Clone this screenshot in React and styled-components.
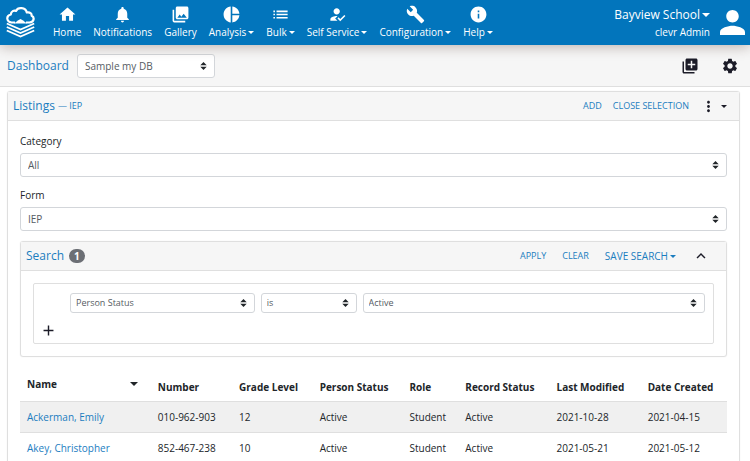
import React from "react";
import styled, { createGlobalStyle, css } from "styled-components";
import {
  MdHome,
  MdNotifications,
  MdPhotoLibrary,
  MdPieChart,
  MdList,
  MdHowToReg,
  MdBuild,
  MdInfo,
  MdPerson,
  MdLibraryAdd,
  MdSettings,
  MdMoreVert,
  MdAdd,
  MdKeyboardArrowUp,
} from "react-icons/md";

const blue = "#0275bc";
const link = "#1b7dbf";
const line = "#dfdfdf";
const bar = "#f6f6f6";

const GlobalStyle = createGlobalStyle`
  * { box-sizing: border-box; }
  body {
    margin: 0;
    background: #fff;
    color: #212529;
    font-family: "Open Sans", "Noto Sans", sans-serif;
    font-size: 10px;
    line-height: 16px;
    overflow-x: hidden;
  }
  button, select { font: inherit; color: inherit; margin: 0; }
  h1, h2 { margin: 0; font-weight: 400; }
  svg { display: block; flex: none; }
`;

const plainButton = css`
  padding: 0;
  border: 0;
  background: none;
  cursor: pointer;
  white-space: nowrap;
`;

const TopNav = styled.nav`
  position: relative;
  display: flex;
  align-items: center;
  height: 45px;
  padding: 0 5px 0 6px;
  background: ${blue};
  color: #fff;
  box-shadow: 0 2px 12px rgba(60, 30, 20, 0.3);
`;

const NavList = styled.ul`
  display: flex;
  gap: 12px;
  margin: 0 0 0 18px;
  padding: 0;
  list-style: none;
`;

const NavButton = styled.button`
  ${plainButton}
  display: flex;
  flex-direction: column;
  align-items: center;
`;

const Label = styled.span`
  display: flex;
  align-items: center;
  gap: 2px;
`;

const Caret = styled.span`
  border: ${(p) => p.$size || 3}px solid transparent;
  border-top-color: currentColor;
  border-bottom: 0;
`;

const Account = styled.div`
  display: flex;
  align-items: center;
  gap: 10px;
  margin-left: auto;
`;

const AccountText = styled.div`
  display: flex;
  flex-direction: column;
  align-items: flex-end;
`;

const SchoolButton = styled.button`
  ${plainButton}
  font-size: 12px;
  line-height: 18px;
`;

const DashBar = styled.header`
  display: flex;
  align-items: center;
  height: 42px;
  padding: 0 11px 0 7px;
  background: ${bar};
  border-bottom: 1px solid ${line};
`;

const PageTitle = styled.h1`
  margin-right: 8px;
  color: ${link};
  font-size: 12px;
`;

const IconGroup = styled.div`
  display: flex;
  align-items: center;
  gap: ${(p) => p.$gap}px;
  margin-left: auto;
`;

const IconButton = styled.button`
  ${plainButton}
  display: flex;
  color: #1c1c28;
`;

const arrows =
  "url(\"data:image/svg+xml,%3Csvg xmlns='http://www.w3.org/2000/svg' viewBox='0 0 4 5'%3E%3Cpath fill='%23212529' d='M2 0L0 2h4zm0 5L0 3h4z'/%3E%3C/svg%3E\")";

const Select = styled.select`
  appearance: none;
  display: block;
  width: 100%;
  height: ${(p) => (p.$small ? 20 : 24)}px;
  padding: 0 20px 0 ${(p) => (p.$small ? 5 : 7)}px;
  border: 1px solid #d3d6da;
  border-radius: 3px;
  background: #fff ${arrows} no-repeat right 7px center / 7px 8px;
  color: #555c63;
  font-size: ${(p) => (p.$small ? 9 : 10)}px;
`;

const DashSelect = styled.div`
  width: 138px;
`;

const Panel = styled.section`
  border: 1px solid ${line};
  border-radius: 3px;
  box-shadow: 0 0 1px rgba(0, 0, 0, 0.15);
`;

const Main = styled.main`
  padding: 4px 10px 0 7px;
`;

const PanelHead = styled.header`
  display: flex;
  align-items: center;
  height: 29px;
  padding: 0 ${(p) => p.$right}px 0 5px;
  background: ${bar};
  border-bottom: 1px solid ${line};
`;

const PanelTitle = styled.h2`
  display: flex;
  align-items: center;
  gap: ${(p) => p.$gap}px;
  color: ${link};
  font-size: 12px;
`;

const Small = styled.span`
  font-size: 9px;
`;

const Badge = styled.span`
  padding: 0 5px;
  border-radius: 7px;
  background: #6c6f75;
  color: #fff;
  font-size: 10px;
  font-weight: 700;
  line-height: 14px;
`;

const Actions = styled.div`
  display: flex;
  align-items: center;
  gap: ${(p) => p.$gap}px;
  margin-left: auto;
`;

const TextButton = styled.button`
  ${plainButton}
  color: ${link};
  font-size: ${(p) => (p.$large ? 10 : 9)}px;
`;

const MenuButton = styled(IconButton)`
  align-items: center;
  gap: 4px;
`;

const PanelBody = styled.div`
  padding: 12px;
`;

const Field = styled.label`
  display: flex;
  flex-direction: column;
  gap: 4px;
  margin-bottom: 10px;
`;

const FilterArea = styled.div`
  padding: 12px;
`;

const FilterBox = styled.div`
  padding: 9px 8px 4px 6px;
  border: 1px solid ${line};
  border-radius: 2px;
`;

const FilterRow = styled.div`
  display: grid;
  grid-template-columns: 185fr 96fr 343fr;
  gap: 6px;
  margin: 0 0 9px 30px;
`;

const Table = styled.table`
  width: 100%;
  margin-top: 13px;
  border-collapse: collapse;
  table-layout: fixed;
`;

const Col = styled.col`
  width: ${(p) => p.$share}%;
`;

const HeadCell = styled.th`
  height: 30px;
  padding: 6px 0 6px 7px;
  text-align: left;
  vertical-align: bottom;
  white-space: nowrap;
`;

const SortButton = styled.button`
  ${plainButton}
  display: flex;
  justify-content: space-between;
  align-items: center;
  width: 100%;
  padding: 0 13px 3px 0;
  font-weight: 700;
`;

const Row = styled.tr`
  border-top: 1px solid ${line};
  background: ${(p) => (p.$shaded ? "#f0f0f0" : "#fff")};
`;

const Cell = styled.td`
  padding: 7px 0 7px 7px;
  white-space: nowrap;
`;

const NameLink = styled.a`
  color: ${link};
  text-decoration: none;
`;

const navItems = [
  ["Home", MdHome],
  ["Notifications", MdNotifications],
  ["Gallery", MdPhotoLibrary],
  ["Analysis", MdPieChart, true],
  ["Bulk", MdList, true],
  ["Self Service", MdHowToReg, true],
  ["Configuration", MdBuild, true],
  ["Help", MdInfo, true],
];

const shares = [18.5, 11.5, 11.4, 12.7, 7.9, 12.9, 12.9, 12.2];
const headings = ["Number", "Grade Level", "Person Status", "Role", "Record Status", "Last Modified", "Date Created"];
const people = [
  ["Ackerman, Emily", "010-962-903", "12", "Active", "Student", "Active", "2021-10-28", "2021-04-15"],
  ["Akey, Christopher", "852-467-238", "10", "Active", "Student", "Active", "2021-05-21", "2021-05-12"],
];

function Logo() {
  return (
    <svg width="29" height="31" viewBox="0 0 29 31" fill="none" stroke="#fff" aria-label="clevr" role="img">
      <path
        d="M9 15.500H5.500C0 14.500 0 8.500 4.800 7.500C5 4 8 3.200 10 3.900C12-.2 19.500 .2 20.800 5.500C24 4.800 26 6.500 25.600 8.800C29 10.500 28 15 23.500 15.500H20"
        strokeWidth="2.200"
        strokeLinejoin="round"
      />
      <path d="M8 16.500L12.300 13.300L14.500 12L16.700 13.300L21 16.500Z" fill="#fff" stroke="none" />
      <path d="M.8 16.500L14.500 22.500L28.200 16.500M.8 20L14.500 26L28.200 20M.8 23.500L14.500 29.500L28.200 23.500" strokeWidth="1.900" />
    </svg>
  );
}

export default function App() {
  return (
    <>
      <GlobalStyle />
      <TopNav>
        <Logo />
        <NavList>
          {navItems.map(([name, Icon, menu]) => (
            <li key={name}>
              <NavButton>
                <Icon size={19} />
                <Label>
                  {name}
                  {menu && <Caret />}
                </Label>
              </NavButton>
            </li>
          ))}
        </NavList>
        <Account>
          <AccountText>
            <SchoolButton>
              <Label>
                Bayview School
                <Caret $size={4} />
              </Label>
            </SchoolButton>
            <span>clevr Admin</span>
          </AccountText>
          <MdPerson size={25} viewBox="4 4 16 16" />
        </Account>
      </TopNav>
      <DashBar>
        <PageTitle>Dashboard</PageTitle>
        <DashSelect>
          <Select aria-label="Dashboard">
            <option>Sample my DB</option>
          </Select>
        </DashSelect>
        <IconGroup $gap={22}>
          <IconButton aria-label="Add widget">
            <MdLibraryAdd size={18} />
          </IconButton>
          <IconButton aria-label="Settings">
            <MdSettings size={18} />
          </IconButton>
        </IconGroup>
      </DashBar>
      <Main>
        <Panel>
          <PanelHead $right={12}>
            <PanelTitle $gap={3}>
              <span>Listings</span>
              <Small>— IEP</Small>
            </PanelTitle>
            <Actions $gap={11}>
              <TextButton>ADD</TextButton>
              <TextButton>CLOSE SELECTION</TextButton>
              <MenuButton aria-label="More options">
                <MdMoreVert size={17} />
                <Caret />
              </MenuButton>
            </Actions>
          </PanelHead>
          <PanelBody>
            <Field>
              Category
              <Select>
                <option>All</option>
              </Select>
            </Field>
            <Field>
              Form
              <Select>
                <option>IEP</option>
              </Select>
            </Field>
            <Panel>
              <PanelHead $right={16}>
                <PanelTitle $gap={5}>
                  Search <Badge>1</Badge>
                </PanelTitle>
                <Actions $gap={16}>
                  <TextButton>APPLY</TextButton>
                  <TextButton>CLEAR</TextButton>
                  <TextButton $large>
                    <Label>
                      SAVE SEARCH
                      <Caret />
                    </Label>
                  </TextButton>
                  <IconButton aria-label="Collapse search">
                    <MdKeyboardArrowUp size={18} />
                  </IconButton>
                </Actions>
              </PanelHead>
              <FilterArea>
                <FilterBox>
                  <FilterRow>
                    <Select $small aria-label="Search field">
                      <option>Person Status</option>
                    </Select>
                    <Select $small aria-label="Operator">
                      <option>is</option>
                    </Select>
                    <Select $small aria-label="Value">
                      <option>Active</option>
                    </Select>
                  </FilterRow>
                  <IconButton aria-label="Add condition">
                    <MdAdd size={17} />
                  </IconButton>
                </FilterBox>
              </FilterArea>
            </Panel>
            <Table>
              <colgroup>
                {shares.map((share, i) => (
                  <Col key={i} $share={share} />
                ))}
              </colgroup>
              <thead>
                <tr>
                  <HeadCell>
                    <SortButton>
                      Name
                      <Caret $size={4} />
                    </SortButton>
                  </HeadCell>
                  {headings.map((h) => (
                    <HeadCell key={h}>{h}</HeadCell>
                  ))}
                </tr>
              </thead>
              <tbody>
                {people.map(([name, ...rest], i) => (
                  <Row key={name} $shaded={i % 2 === 0}>
                    <Cell>
                      <NameLink href="#">{name}</NameLink>
                    </Cell>
                    {rest.map((value, j) => (
                      <Cell key={j}>{value}</Cell>
                    ))}
                  </Row>
                ))}
              </tbody>
            </Table>
          </PanelBody>
        </Panel>
      </Main>
    </>
  );
}
